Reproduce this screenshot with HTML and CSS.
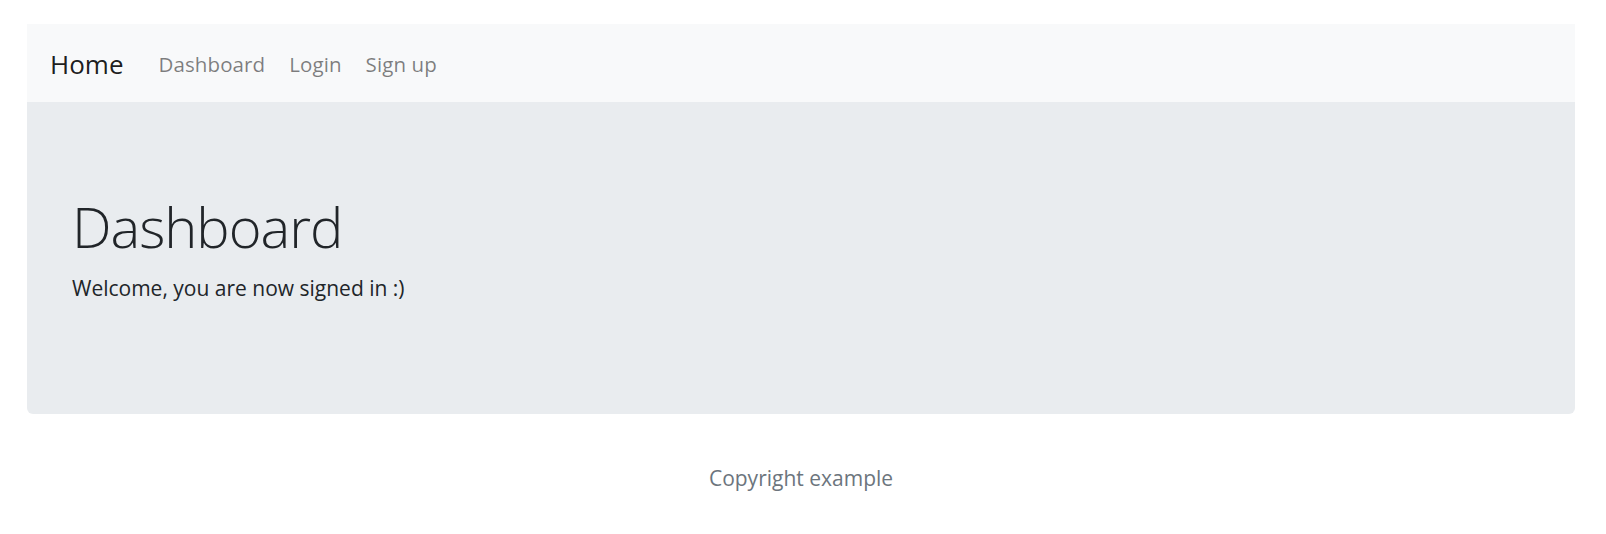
FILE: index.html
```html
<!DOCTYPE html>
<html lang="en">
<head>
<meta charset="utf-8">
<title>Dashboard</title>
<link rel="stylesheet" href="styles.css">
</head>
<body>
<div class="container">
  <nav class="navbar">
    <a class="brand" href="#">Home</a>
    <ul class="nav">
      <li><a class="nav-link" href="#">Dashboard</a></li>
      <li><a class="nav-link" href="#">Login</a></li>
      <li><a class="nav-link" href="#">Sign up</a></li>
    </ul>
  </nav>
  <section class="jumbotron">
    <h1 class="title">Dashboard</h1>
    <p class="lead">Welcome, you are now signed in :)</p>
  </section>
  <footer class="footer">Copyright example</footer>
</div>
</body>
</html>
```
FILE: styles.css
```css
html, body {
  margin: 0;
  padding: 0;
  background: #ffffff;
}
body {
  font-family: "Open Sans", "Noto Sans", "Liberation Sans", sans-serif;
  color: #212529;
}
.container {
  padding: 24px 31px 0 27px;
}
.navbar {
  display: flex;
  align-items: center;
  height: 78px;
  background: #f8f9fa;
  padding: 2px 20px 0 23px;
  box-sizing: border-box;
}
.brand {
  font-size: 26px;
  color: rgba(0, 0, 0, 0.9);
  text-decoration: none;
  margin-right: 23px;
}
.nav {
  display: flex;
  list-style: none;
  margin: 0;
  padding: 0;
}
.nav-link {
  display: block;
  padding: 0 12px;
  font-size: 20.5px;
  letter-spacing: 0.1px;
  color: rgba(0, 0, 0, 0.5);
  text-decoration: none;
}
.jumbotron {
  background: #e9ecef;
  border-radius: 0 0 6px 6px;
  height: 312px;
  box-sizing: border-box;
  padding: 91px 45px 0 45px;
}
.title {
  margin: 0;
  font-size: 56px;
  font-weight: 300;
  letter-spacing: -1px;
  line-height: 1.2;
}
.lead {
  margin: 13px 0 0 0;
  font-size: 21px;
  line-height: 1.5;
}
.footer {
  text-align: center;
  color: #6c757d;
  font-size: 21px;
  padding-top: 50px;
}
```
